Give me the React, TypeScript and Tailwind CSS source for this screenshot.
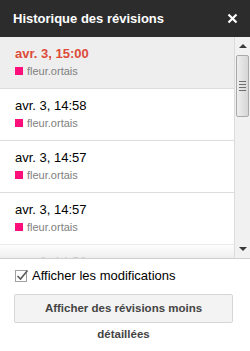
import React from 'react';

const revisions = [
  { time: 'avr. 3, 15:00', author: 'fleur.ortais', current: true },
  { time: 'avr. 3, 14:58', author: 'fleur.ortais' },
  { time: 'avr. 3, 14:57', author: 'fleur.ortais' },
  { time: 'avr. 3, 14:57', author: 'fleur.ortais' },
  { time: 'avr. 3, 14:56', author: 'fleur.ortais' },
];

function Scrollbar() {
  return (
    <div className="w-[16px] shrink-0 bg-[#f1f1f1] border-l border-[#dcdcdc] flex flex-col">
      <div className="h-[18px] flex items-center justify-center">
        <div className="w-0 h-0 border-x-[4px] border-x-transparent border-b-[4px] border-b-[#3a3a3a]" />
      </div>
      <div className="mx-px h-[62px] rounded-[2px] border border-[#a9a9a9] bg-gradient-to-r from-[#eeeeee] to-[#d6d6d6] flex items-center justify-center">
        <div className="flex flex-col gap-[2px]">
          <div className="w-[7px] h-px bg-[#6f6f6f]" />
          <div className="w-[7px] h-px bg-[#6f6f6f]" />
          <div className="w-[7px] h-px bg-[#6f6f6f]" />
          <div className="w-[7px] h-px bg-[#6f6f6f]" />
        </div>
      </div>
      <div className="flex-1" />
      <div className="h-[18px] flex items-center justify-center">
        <div className="w-0 h-0 border-x-[4px] border-x-transparent border-t-[4px] border-t-[#3a3a3a]" />
      </div>
    </div>
  );
}

export default function App() {
  return (
    <div className="w-[250px] h-[351px] bg-white flex flex-col overflow-hidden font-['Liberation_Sans',Arial,sans-serif]">
      <div className="h-[37px] shrink-0 bg-[#2c2c2c] flex items-center justify-between pl-[13px] pr-[12px]">
        <span className="text-white font-bold text-[13px]">Historique des révisions</span>
        <svg width="11" height="11" viewBox="0 0 11 11">
          <path d="M1.5 1.5 L9.5 9.5 M9.5 1.5 L1.5 9.5" stroke="#ffffff" strokeWidth="2.2" />
        </svg>
      </div>

      <div className="h-[222px] shrink-0 flex border-b border-[#cfcfcf]">
        <div className="relative flex-1 overflow-hidden">
          {revisions.map((r, i) => (
            <div
              key={i}
              className={`h-[52px] border-b border-[#dddddd] pl-[15px] pt-[9px] ${r.current ? 'bg-[#eeeeee]' : 'bg-white'}`}
            >
              <div className={`text-[13px] leading-[16px] ${r.current ? 'text-[#dd4b39] font-bold' : 'text-black'}`}>
                {r.time}
              </div>
              <div className="mt-[2px] flex items-center gap-[4px] text-[11px] leading-[14px] text-[#808080]">
                <span className="w-[8px] h-[8px] shrink-0 bg-[#ff0f7b] inline-block" />
                {r.author}
              </div>
            </div>
          ))}
          <div className="absolute left-0 right-0 bottom-0 h-[14px] bg-gradient-to-b from-white/40 to-[#ececec]/90" />
        </div>
        <Scrollbar />
      </div>

      <div className="flex-1 px-[14px] pt-[8px]">
        <label className="h-[17px] flex items-center gap-[3px] text-[13px] text-black pl-px">
          <svg width="14" height="13" viewBox="0 0 14 13" className="shrink-0">
            <rect x="0.5" y="1.5" width="11" height="11" fill="#ffffff" stroke="#a0a0a0" />
            <path d="M2.5 7 L5.5 10 L12.5 1.5" fill="none" stroke="#5a5a5a" strokeWidth="1.6" />
          </svg>
          Afficher les modifications
        </label>
        <button className="mt-[10px] w-[219px] h-[29px] rounded-[2px] border border-[#d6d6d6] bg-[#f3f3f3] text-[11.5px] font-bold text-[#444444] leading-[27px] text-center px-[8px]">
          <span className="block">Afficher des révisions moins</span>
          <span className="block leading-[24px]">détaillées</span>
        </button>
      </div>
    </div>
  );
}
